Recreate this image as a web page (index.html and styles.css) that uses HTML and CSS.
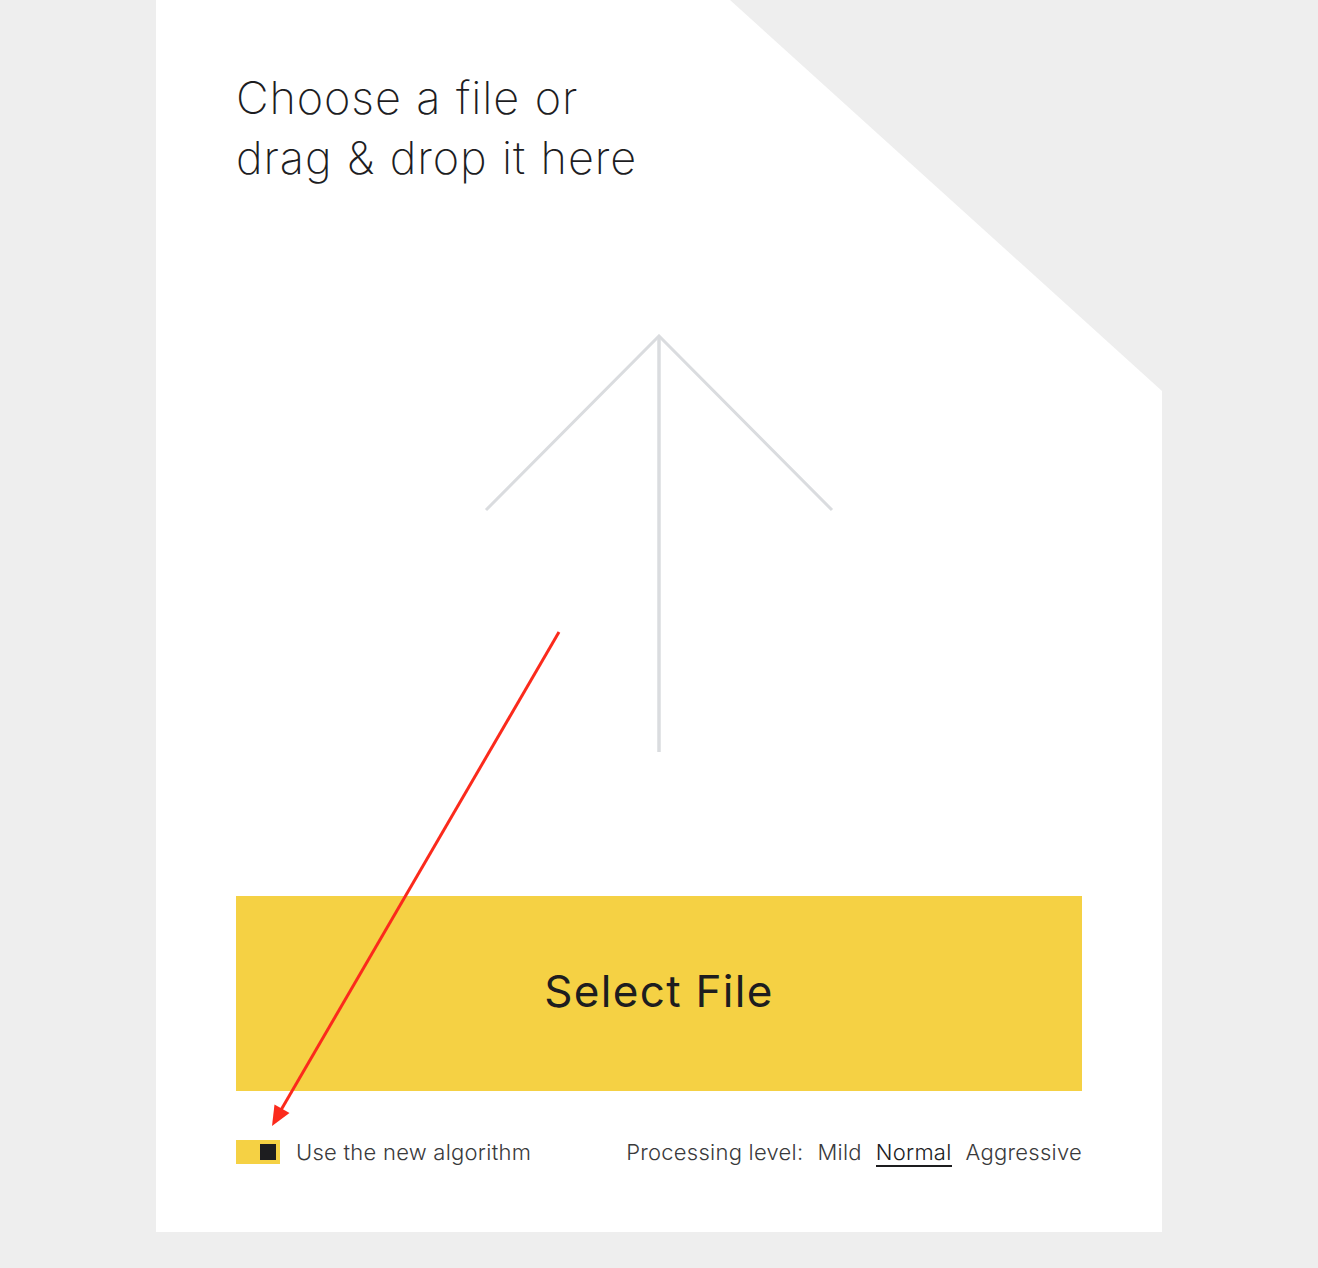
FILE: index.html
```html
<!DOCTYPE html>
<html>
<head>
<meta charset="utf-8">
<link rel="stylesheet" href="styles.css">
</head>
<body>
<div class="card">
  <h1 class="title">Choose a file or<br>drag &amp; drop it here</h1>
  <div class="icon-wrap">
    <svg class="upload" width="350" height="420" viewBox="0 0 350 420">
      <path d="M2 176 L175 2 L348 176" fill="none" stroke="#dadcdf" stroke-width="3"/>
      <path d="M175 2 L175 418" fill="none" stroke="#dadcdf" stroke-width="3.5"/>
    </svg>
  </div>
  <button class="select">Select File</button>
  <div class="options">
    <label class="toggle"><span class="switch"><span class="knob"></span></span><span class="toggle-label">Use the new algorithm</span></label>
    <div class="levels">
      <span class="levels-label">Processing level:</span>
      <span class="level">Mild</span>
      <span class="level active">Normal</span>
      <span class="level">Aggressive</span>
    </div>
  </div>
</div>
<svg class="annotation" width="1318" height="1268" viewBox="0 0 1318 1268">
  <line x1="559" y1="632" x2="281" y2="1110" stroke="#fb2a1c" stroke-width="3"/>
  <polygon points="272,1126 289.5,1113 274.5,1104.5" fill="#fb2a1c"/>
</svg>
</body>
</html>
```
FILE: styles.css
```css
html, body {
  margin: 0;
  padding: 0;
}
body {
  background: #eeeeee;
  font-family: Inter, "Liberation Sans", sans-serif;
  color: #1d1d1f;
  width: 1318px;
  height: 1268px;
  position: relative;
  overflow: hidden;
}
.card {
  width: 1006px;
  height: 1232px;
  margin-left: 156px;
  background: #ffffff;
  box-sizing: border-box;
  padding: 68px 80px 0 80px;
  display: flex;
  flex-direction: column;
  clip-path: polygon(0 0, 574px 0, 100% 391px, 100% 100%, 0 100%);
}
.title {
  margin: 0;
  font-size: 45px;
  font-weight: 200;
  line-height: 60px;
  letter-spacing: 0.9px;
  word-spacing: 1px;
  color: #1d1d1f;
}
.icon-wrap {
  display: flex;
  justify-content: center;
  margin-top: 146px;
}
.upload {
  display: block;
}
.select {
  margin-top: 142px;
  height: 195px;
  width: 100%;
  border: 0;
  background: #f5d144;
  font-family: Inter, "Liberation Sans", sans-serif;
  font-size: 44px;
  font-weight: 400;
  color: #1d1d1f;
  letter-spacing: 1.3px;
  padding: 0 0 5px 0;
}
.options {
  margin-top: 46px;
  display: flex;
  justify-content: space-between;
  align-items: center;
  font-size: 22px;
  font-weight: 300;
  letter-spacing: 0.25px;
  color: #3a3a3c;
}
.toggle {
  display: flex;
  align-items: center;
  gap: 16px;
}
.switch {
  width: 44px;
  height: 24px;
  background: #f5d144;
  box-sizing: border-box;
  padding: 4px;
  display: flex;
  justify-content: flex-end;
}
.knob {
  width: 16px;
  height: 16px;
  background: #1d1d1f;
}
.levels {
  display: flex;
  align-items: center;
  gap: 14px;
}
.level.active {
  color: #1d1d1f;
  border-bottom: 2px solid #1d1d1f;
  line-height: 26px;
  margin-top: 2px;
}
.annotation {
  position: absolute;
  top: 0;
  left: 0;
  pointer-events: none;
}
```
